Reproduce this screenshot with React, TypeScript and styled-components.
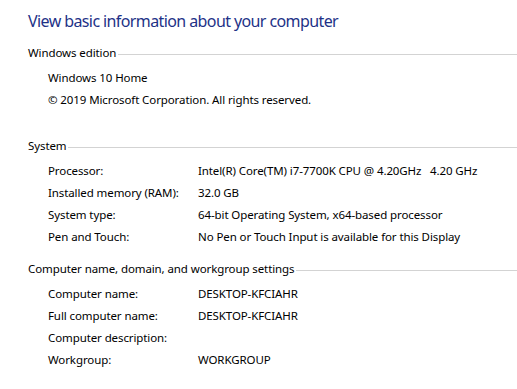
import styled, { createGlobalStyle } from "styled-components";

const GlobalStyle = createGlobalStyle`
  html, body {
    margin: 0;
    padding: 0;
    background: #ffffff;
  }
  body {
    font-family: "Noto Sans", "Liberation Sans", sans-serif;
    color: #000000;
  }
`;

interface Row {
  label?: string;
  value: string;
}

interface Section {
  title: string;
  rows: Row[];
  gapAfter: number;
}

const sections: Section[] = [
  {
    title: "Windows edition",
    rows: [
      { value: "Windows 10 Home" },
      { value: "© 2019 Microsoft Corporation. All rights reserved." },
    ],
    gapAfter: 27,
  },
  {
    title: "System",
    rows: [
      {
        label: "Processor:",
        value: "Intel(R) Core(TM) i7-7700K CPU @ 4.20GHz   4.20 GHz",
      },
      { label: "Installed memory (RAM):", value: "32.0 GB" },
      { label: "System type:", value: "64-bit Operating System, x64-based processor" },
      { label: "Pen and Touch:", value: "No Pen or Touch Input is available for this Display" },
    ],
    gapAfter: 13,
  },
  {
    title: "Computer name, domain, and workgroup settings",
    rows: [
      { label: "Computer name:", value: "DESKTOP-KFCIAHR" },
      { label: "Full computer name:", value: "DESKTOP-KFCIAHR" },
      { label: "Computer description:", value: "" },
      { label: "Workgroup:", value: "WORKGROUP" },
    ],
    gapAfter: 0,
  },
];

const App: React.FC = () => {
  return (
    <>
      <GlobalStyle />
      <Page>
        <Title>View basic information about your computer</Title>
        {sections.map((section) => (
          <Group key={section.title} gapAfter={section.gapAfter}>
            <GroupHeader>
              <GroupTitle>{section.title}</GroupTitle>
              <Rule />
            </GroupHeader>
            <Rows>
              {section.rows.map((row, i) =>
                row.label !== undefined ? (
                  <InfoRow key={i}>
                    <Label>{row.label}</Label>
                    <Value>{row.value}</Value>
                  </InfoRow>
                ) : (
                  <PlainRow key={i}>{row.value}</PlainRow>
                )
              )}
            </Rows>
          </Group>
        ))}
      </Page>
    </>
  );
};

const Page = styled.div`
  width: 517px;
  height: 389px;
  padding: 8px 0 0 28px;
  box-sizing: border-box;
  overflow: hidden;
  font-size: 11.5px;
  letter-spacing: -0.1px;
`;

const Title = styled.h1`
  margin: 0 0 11px 0;
  font-size: 16px;
  font-weight: 400;
  line-height: 26px;
  letter-spacing: -0.6px;
  color: #1e3287;
`;

interface GroupProps {
  gapAfter: number;
}

const Group = styled.section<GroupProps>`
  margin-bottom: ${(props) => props.gapAfter}px;
`;

const GroupHeader = styled.div`
  display: flex;
  align-items: center;
  height: 16px;
`;

const GroupTitle = styled.span`
  line-height: 16px;
  white-space: nowrap;
`;

const Rule = styled.div`
  flex: 1;
  height: 1px;
  margin: 2px 0 0 2px;
  background: #d3d3d3;
`;

const Rows = styled.div`
  padding: 6px 0 0 20px;
`;

const PlainRow = styled.div`
  height: 22px;
  line-height: 22px;
  white-space: pre;
`;

const InfoRow = styled.div`
  display: grid;
  grid-template-columns: 150px 1fr;
  height: 22px;
  line-height: 22px;
`;

const Label = styled.span`
  white-space: nowrap;
`;

const Value = styled.span`
  white-space: pre;
`;

export default App;
